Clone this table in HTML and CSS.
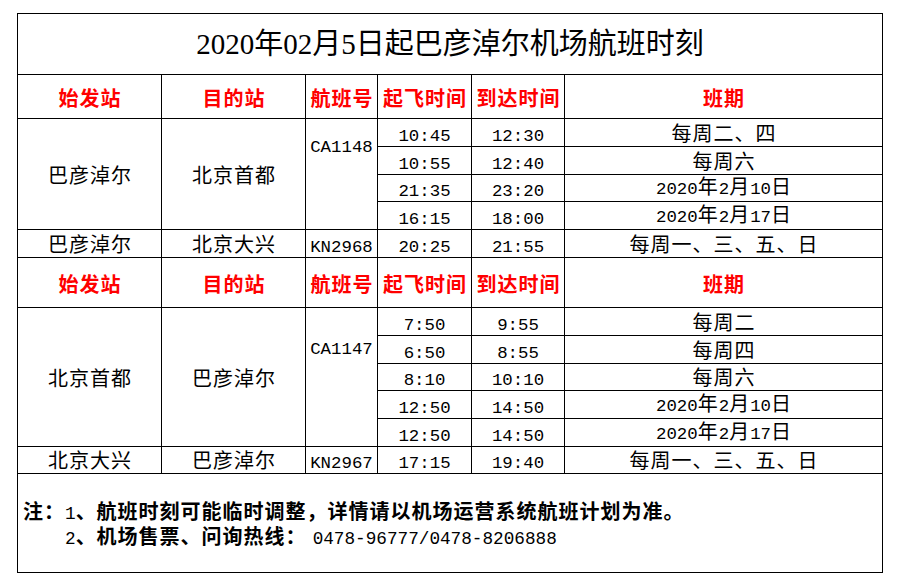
FILE: index.html
```html
<!DOCTYPE html>
<html lang="zh-CN">
<head>
<meta charset="utf-8">
<title>2020年02月5日起巴彦淖尔机场航班时刻</title>
<link rel="stylesheet" href="styles.css">
</head>
<body>
<table class="sched">
  <colgroup>
    <col class="w-stn"><col class="w-stn"><col class="w-fn"><col class="w-t1"><col class="w-t2"><col class="w-days">
  </colgroup>
  <tr class="h61"><td colspan="6" class="title">2020年02月5日起巴彦淖尔机场航班时刻</td></tr>
  <tr class="h44 head"><th>始发站</th><th>目的站</th><th>航班号</th><th>起飞时间</th><th>到达时间</th><th>班期</th></tr>
  <tr class="h28">
    <td rowspan="4" class="cn mid">巴彦淖尔</td>
    <td rowspan="4" class="cn mid">北京首都</td>
    <td rowspan="2" class="num mid">CA1148</td>
    <td class="num">10:45</td><td class="num">12:30</td><td class="cn">每周二、四</td>
  </tr>
  <tr class="h28"><td class="num">10:55</td><td class="num">12:40</td><td class="cn">每周六</td></tr>
  <tr class="h27">
    <td rowspan="2" class="blank"></td>
    <td class="num">21:35</td><td class="num">23:20</td><td class="cn"><span class="n">2020</span>年<span class="n">2</span>月<span class="n">10</span>日</td>
  </tr>
  <tr class="h28"><td class="num">16:15</td><td class="num">18:00</td><td class="cn"><span class="n">2020</span>年<span class="n">2</span>月<span class="n">17</span>日</td></tr>
  <tr class="h28"><td class="cn">巴彦淖尔</td><td class="cn">北京大兴</td><td class="num">KN2968</td><td class="num">20:25</td><td class="num">21:55</td><td class="cn">每周一、三、五、日</td></tr>
  <tr class="h50 head"><th>始发站</th><th>目的站</th><th>航班号</th><th>起飞时间</th><th>到达时间</th><th>班期</th></tr>
  <tr class="h28">
    <td rowspan="5" class="cn mid">北京首都</td>
    <td rowspan="5" class="cn mid">巴彦淖尔</td>
    <td rowspan="3" class="num mid">CA1147</td>
    <td class="num">7:50</td><td class="num">9:55</td><td class="cn">每周二</td>
  </tr>
  <tr class="h28"><td class="num">6:50</td><td class="num">8:55</td><td class="cn">每周四</td></tr>
  <tr class="h27"><td class="num">8:10</td><td class="num">10:10</td><td class="cn">每周六</td></tr>
  <tr class="h28">
    <td rowspan="2" class="blank"></td>
    <td class="num">12:50</td><td class="num">14:50</td><td class="cn"><span class="n">2020</span>年<span class="n">2</span>月<span class="n">10</span>日</td>
  </tr>
  <tr class="h28"><td class="num">12:50</td><td class="num">14:50</td><td class="cn"><span class="n">2020</span>年<span class="n">2</span>月<span class="n">17</span>日</td></tr>
  <tr class="h27"><td class="cn">北京大兴</td><td class="cn">巴彦淖尔</td><td class="num">KN2967</td><td class="num">17:15</td><td class="num">19:40</td><td class="cn">每周一、三、五、日</td></tr>
  <tr class="h99">
    <td colspan="6" class="notes">
      <div class="note-line">注：<span class="nn">1</span>、航班时刻可能临时调整，详情请以机场运营系统航班计划为准。</div>
      <div class="note-line indent"><span class="nn">2</span>、机场售票、问询热线：<span class="nn phone">0478-96777/0478-8206888</span></div>
    </td>
  </tr>
</table>
</body>
</html>
```

FILE: styles.css
```css
html, body {
  margin: 0;
  background: #ffffff;
}
body {
  padding: 13px 0 0 17px;
  font-family: "Noto Sans CJK SC", sans-serif;
  color: #000;
}
.sched {
  border-collapse: collapse;
  table-layout: fixed;
  width: 866px;
}
.w-stn { width: 144px; }
.w-fn { width: 72px; }
.w-t1 { width: 94px; }
.w-t2 { width: 93px; }
.w-days { width: 318px; }

.sched td, .sched th {
  border: 1px solid #000;
  padding: 0;
  text-align: center;
  white-space: nowrap;
  line-height: 20px;
  vertical-align: middle;
}
.h61 { height: 61px; }
.h44 { height: 44px; }
.h50 { height: 50px; }
.h28 { height: 28px; }
.h27 { height: 27px; }
.h99 { height: 99px; }

.title {
  font-family: "Liberation Serif", "Noto Sans CJK SC", serif;
  font-size: 29px;
  font-weight: normal;
  line-height: 32px;
  padding-top: 2px;
}
.head th {
  color: #ff0000;
  font-weight: 700;
  font-size: 20px;
  letter-spacing: 1px;
  text-indent: 1px;
  padding-top: 3px;
}
.cn {
  font-family: "Noto Sans CJK SC", sans-serif;
  font-size: 20px;
  letter-spacing: 1px;
  text-indent: 1px;
  padding-top: 4px;
}
.num, .n {
  font-family: "Liberation Mono", monospace;
  font-size: 17.4px;
  letter-spacing: 0;
}
.sched td.num {
  padding-top: 8px;
  line-height: 18px;
}
.sched td.mid {
  padding-top: 2px;
  line-height: 20px;
}
.sched td.blank {
  border-top: hidden;
}
.sched td.notes {
  text-align: left;
  padding: 3px 0 0 5px;
  font-family: "Noto Sans CJK SC", sans-serif;
  font-weight: 700;
  font-size: 20px;
  letter-spacing: 1px;
  line-height: 22px;
}
.nn {
  font-family: "Liberation Mono", monospace;
  font-weight: 400;
  font-size: 17.7px;
  letter-spacing: 0;
}
.phone {
  margin-left: 6px;
}
.indent {
  padding-left: 42px;
}
```
